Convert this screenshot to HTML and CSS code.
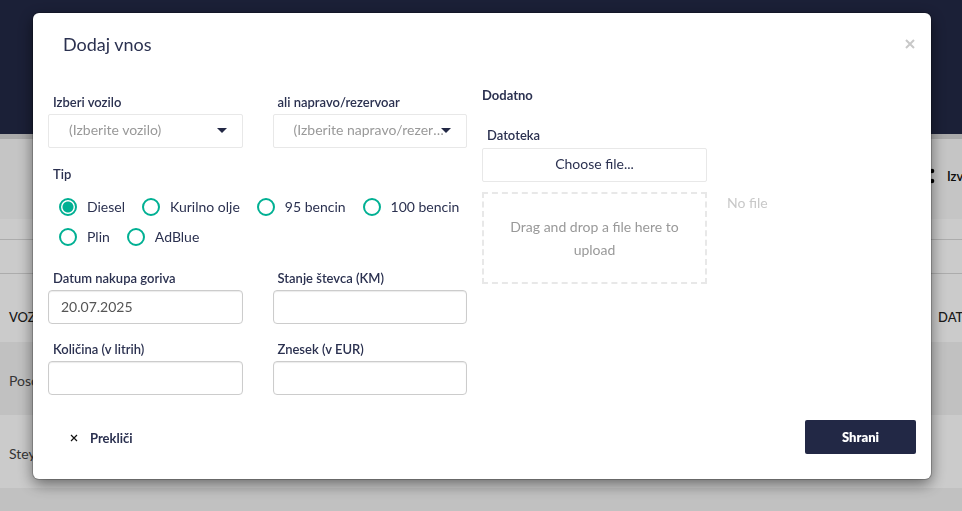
FILE: index.html
```html
<!DOCTYPE html>
<html lang="sl">
<head>
<meta charset="utf-8">
<title>Dodaj vnos</title>
<link rel="stylesheet" href="styles.css">
</head>
<body>
<div class="page">
  <header class="topbar"></header>
  <div class="toolbar">
    <button class="export" type="button">
      <svg width="14" height="16" viewBox="0 0 14 16" aria-hidden="true"><path d="M2 8 10 3M2 8l8 5" stroke="#111" stroke-width="1.5"/><circle cx="2" cy="8" r="2.3"/><circle cx="10" cy="3" r="2.3"/><circle cx="10" cy="13" r="2.3"/></svg>
      <span>Izvoz</span>
    </button>
  </div>
  <div class="filters"></div>
  <table class="entries">
    <thead><tr><th>VOZILO</th><th class="date">DATUM</th></tr></thead>
    <tbody>
      <tr><td>Posoda</td><td></td></tr>
      <tr><td>Steyr</td><td></td></tr>
      <tr><td></td><td></td></tr>
    </tbody>
  </table>
</div>
<div class="backdrop">
  <form class="dialog" role="dialog" aria-labelledby="title">
    <div class="dialog-head">
      <h1 id="title">Dodaj vnos</h1>
      <button class="close" type="button" aria-label="Zapri"><svg width="10" height="10" viewBox="0 0 10 10"><path d="M1 1l8 8M9 1L1 9" stroke="#c8c8c8" stroke-width="2"/></svg></button>
    </div>
    <div class="columns">
      <div class="main">
        <div class="pair">
          <div class="field">
            <label for="vehicle">Izberi vozilo</label>
            <div class="select"><select id="vehicle"><option>(Izberite vozilo)</option></select></div>
          </div>
          <div class="field">
            <label for="device">ali napravo/rezervoar</label>
            <div class="select"><select id="device"><option>(Izberite napravo/rezervoar)</option></select></div>
          </div>
        </div>
        <fieldset class="types">
          <legend>Tip</legend>
          <div class="options">
            <label><input type="radio" name="type" checked>Diesel</label>
            <label><input type="radio" name="type">Kurilno olje</label>
            <label><input type="radio" name="type">95 bencin</label>
            <label><input type="radio" name="type">100 bencin</label>
            <label><input type="radio" name="type">Plin</label>
            <label><input type="radio" name="type">AdBlue</label>
          </div>
        </fieldset>
        <div class="pair">
          <div class="field">
            <label for="date">Datum nakupa goriva</label>
            <input class="text" id="date" type="text" value="20.07.2025">
          </div>
          <div class="field">
            <label for="mileage">Stanje števca (KM)</label>
            <input class="text" id="mileage" type="text">
          </div>
          <div class="field">
            <label for="quantity">Količina (v litrih)</label>
            <input class="text" id="quantity" type="text">
          </div>
          <div class="field">
            <label for="amount">Znesek (v EUR)</label>
            <input class="text" id="amount" type="text">
          </div>
        </div>
      </div>
      <div class="extra">
        <h2>Dodatno</h2>
        <div class="upload">
          <div class="field">
            <label for="file">Datoteka</label>
            <button class="choose" id="file" type="button">Choose file...</button>
            <div class="drop">Drag and drop a file here to upload</div>
          </div>
          <span class="no-file">No file</span>
        </div>
      </div>
    </div>
    <div class="actions">
      <button class="cancel" type="button"><svg width="8" height="8" viewBox="0 0 8 8" aria-hidden="true"><path d="M1 1l6 6M7 1L1 7" stroke="#111" stroke-width="1.2"/></svg>Prekliči</button>
      <button class="save" type="submit">Shrani</button>
    </div>
  </form>
</div>
</body>
</html>
```
FILE: styles.css
```css
*, ::before, ::after { box-sizing: border-box; }

body {
  margin: 0;
  overflow: hidden;
  font-family: Lato, "Open Sans", sans-serif;
  font-size: 14px;
  line-height: 20px;
  color: #2b3150;
}

button, input, select { font: inherit; color: inherit; }
button { padding: 0; border: 0; background: none; }

.page { height: 100vh; overflow: hidden; background: #fefefe; }
.topbar { height: 139px; background: #222845; border-bottom: 5px solid #d5d5d5; }

.toolbar {
  display: flex;
  justify-content: flex-end;
  height: 80px;
  padding-top: 27px;
  background: #f7f7f7;
}
.export {
  display: flex;
  align-items: center;
  gap: 11px;
  width: 40px;
  height: 20px;
  font-size: 13px;
  font-weight: 600;
  color: #111;
}
.export svg { flex: none; }

.filters { height: 55px; padding-top: 20px; }
.filters::before {
  content: "";
  display: block;
  height: 35px;
  border: 1px solid #d8d8d8;
  border-width: 1px 0;
}

.entries { width: 100%; table-layout: fixed; border-collapse: collapse; color: #444; }
.entries th, .entries td { padding: 0 0 0 9px; text-align: left; white-space: nowrap; overflow: hidden; }
.entries th { height: 68px; padding-top: 18px; font-size: 13px; font-weight: 500; color: #222; }
.entries th.date { width: 24px; padding-left: 0; }
.entries td { height: 73px; padding-top: 4px; }
.entries tbody tr:nth-child(odd) { background: #f2f2f2; }

.backdrop {
  position: fixed;
  inset: 0;
  padding: 13px 31px 0 33px;
  background: rgba(0, 0, 0, 0.2);
}

.dialog {
  padding: 0 15px 25px;
  border-radius: 6px;
  background: #fff;
  box-shadow: 0 0 0 1px rgba(0, 0, 0, 0.2), 0 5px 15px rgba(0, 0, 0, 0.5);
}
.dialog-head {
  display: flex;
  align-items: center;
  justify-content: space-between;
  height: 61px;
  padding-left: 15px;
}
h1 { margin: 0; font-size: 18px; font-weight: 400; }
.close { display: flex; padding: 1px; }

.columns { display: grid; grid-template-columns: 1fr 1fr; }
.main { padding: 18px 15px 0 0; }

.pair { display: grid; grid-template-columns: 1fr 1fr; gap: 15px 30px; }
.field { display: flex; flex-direction: column; min-width: 0; }
.field > label, legend {
  padding: 0 5px;
  font-size: 13px;
  font-weight: 600;
}
.field > label { margin-bottom: 2px; }

.select { position: relative; }
.select::after {
  content: "";
  position: absolute;
  top: 14px;
  right: 16px;
  border: 5px solid transparent;
  border-top-color: #222845;
  border-bottom: 0;
  pointer-events: none;
}
select {
  display: block;
  appearance: none;
  width: 100%;
  height: 34px;
  padding: 0 21px 2px 20px;
  border: 1px solid #e8e8e8;
  border-radius: 2px;
  background: #fff;
  color: #999;
  text-overflow: ellipsis;
}

.types { margin: 16px 0; padding: 0; border: 0; }
.options {
  display: flex;
  flex-wrap: wrap;
  column-gap: 17px;
  padding: 8px 0 0 11px;
  line-height: 30px;
}
.options label { display: flex; align-items: center; gap: 10px; }
.options input {
  appearance: none;
  width: 18px;
  height: 18px;
  margin: 0;
  border: 2px solid #00b093;
  border-radius: 50%;
}
.options input:checked { background: radial-gradient(circle, #00b093 5px, #fff 6px); }

.text {
  width: 100%;
  height: 34px;
  padding: 0 12px 2px;
  border: 1px solid #ccc;
  border-radius: 4px;
  color: #555;
  box-shadow: inset 0 1px 1px rgba(0, 0, 0, 0.08);
}

h2 { margin: 11px 0 20px; font-size: 13px; font-weight: 700; }
.upload { display: grid; grid-template-columns: 225px 1fr; gap: 20px; }
.field > label[for="file"] { margin-bottom: 3px; }
.choose { height: 34px; padding-bottom: 2px; border: 1px solid #e8e8e8; border-radius: 2px; }
.drop {
  margin-top: 10px;
  padding: 21px 20px;
  border: 2px dashed #e8e8e8;
  line-height: 23px;
  text-align: center;
  color: #999;
}
.no-file { padding-top: 68px; color: #c8c8c8; }

.actions { display: flex; justify-content: space-between; align-items: center; margin-top: 25px; }
.cancel { display: flex; align-items: center; gap: 12px; padding: 2px 22px 0; font-size: 13px; font-weight: 700; }
.save {
  width: 111px;
  height: 34px;
  border-radius: 2px;
  background: #222845;
  color: #fff;
  font-size: 13px;
  font-weight: 800;
}
```
